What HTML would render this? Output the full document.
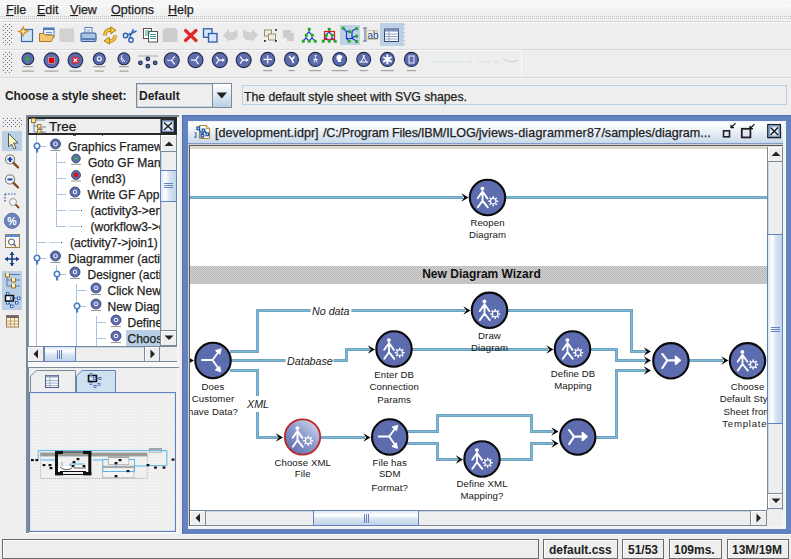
<!DOCTYPE html>
<html><head><meta charset="utf-8">
<style>
*{box-sizing:border-box}
html,body{margin:0;padding:0}
body{width:791px;height:559px;overflow:hidden;position:relative;background:#eeeeee;font-family:"Liberation Sans",sans-serif;color:#333}
.a{position:absolute}
.t{position:absolute;white-space:nowrap;line-height:normal;-webkit-text-stroke:0.25px currentColor}
.dots{background-image:radial-gradient(circle at 1px 1px,#b9b9b9 0.7px,transparent 0.9px);background-size:3px 3px}
.u{text-decoration:underline;text-underline-offset:1px}
</style></head><body>

<svg width="0" height="0" style="position:absolute"><defs>
<pattern id="pd" width="4" height="4" patternUnits="userSpaceOnUse"><rect x="0" y="0" width="1" height="1" fill="#c2c2c2"/><rect x="2" y="2" width="1" height="1" fill="#c2c2c2"/></pattern>
<pattern id="p2" width="2" height="2" patternUnits="userSpaceOnUse"><rect x="0" y="0" width="1" height="1" fill="#c4c4c4"/></pattern>
<pattern id="p3" width="3" height="3" patternUnits="userSpaceOnUse"><rect x="0" y="0" width="1" height="1" fill="#c4c4c4"/></pattern>
<pattern id="pw" width="2" height="2" patternUnits="userSpaceOnUse"><rect x="0" y="0" width="1" height="1" fill="#ffffff"/></pattern>
<pattern id="pg" width="4" height="4" patternUnits="userSpaceOnUse"><rect x="1" y="0" width="1" height="1" fill="#66748a"/><rect x="3" y="2" width="1" height="1" fill="#66748a"/></pattern>
</defs></svg>
<!-- MENU BAR -->
<div class="a" style="left:0;top:0;width:791px;height:22px;background:linear-gradient(#f6f6f6,#eeeeee)"></div>
<svg class="a" style="left:0;top:0" width="791" height="130">
<rect x="0" y="3" width="791" height="5" fill="url(#pw)"/>
<rect x="0" y="14" width="791" height="1" fill="url(#p3)"/>
<rect x="0" y="16" width="791" height="1" fill="url(#p2)"/>
<rect x="1" y="18" width="790" height="1" fill="url(#p2)"/>
<rect x="0" y="20" width="791" height="1" fill="url(#pw)"/>
<rect x="0" y="21" width="791" height="1" fill="#d2d2d2"/>
<rect x="0" y="22" width="791" height="1" fill="#fbfbfb"/>
<rect x="0" y="45" width="406" height="1" fill="url(#p2)"/>
<rect x="1" y="47" width="405" height="1" fill="url(#p2)"/>
<rect x="404" y="23" width="2" height="24" fill="url(#pd)"/>
<rect x="2" y="24" width="10" height="22" fill="url(#pg)"/>
<rect x="0" y="49" width="791" height="1" fill="#d8d8d8"/>
<rect x="0" y="50" width="522" height="1" fill="#fbfbfb"/>
<rect x="521" y="50" width="1" height="27" fill="#fbfbfb"/>
<rect x="0" y="75" width="522" height="1" fill="url(#p2)"/>
<rect x="0" y="77" width="791" height="1" fill="#d6d6d6"/>
<rect x="0" y="78" width="791" height="1" fill="url(#pw)"/>
<rect x="2" y="52" width="10" height="22" fill="url(#pg)"/>
<rect x="3" y="118" width="19" height="9" fill="url(#pg)"/>
</svg>
<div class="t" style="left:6px;top:2.5px;font-size:12.5px;color:#1e1e1e"><span class="u">F</span>ile</div>
<div class="t" style="left:37px;top:2.5px;font-size:12.5px;color:#1e1e1e"><span class="u">E</span>dit</div>
<div class="t" style="left:70px;top:2.5px;font-size:12.5px;color:#1e1e1e"><span class="u">V</span>iew</div>
<div class="t" style="left:111px;top:2.5px;font-size:12.5px;color:#1e1e1e"><span class="u">O</span>ptions</div>
<div class="t" style="left:168px;top:2.5px;font-size:12.5px;color:#1e1e1e"><span class="u">H</span>elp</div>

<!-- STYLE ROW -->
<div class="t" style="left:5px;top:88.5px;font-size:12px;font-weight:bold;-webkit-text-stroke:0;letter-spacing:-0.1px;color:#222">Choose a style sheet:</div>
<div class="a" style="left:136px;top:83px;width:96px;height:25px;border:1px solid #7a8a99;background:#eeeeee"></div>
<div class="a" style="left:137px;top:84px;width:75px;height:23px;border:1px solid #c6d6e6;border-right:none"></div>
<div class="a" style="left:212px;top:84px;width:1px;height:23px;background:#7a8a99"></div>
<div class="a" style="left:213px;top:84px;width:18px;height:23px;background:linear-gradient(#ffffff 0%,#e6eef6 40%,#b8cfe5 100%)"></div>
<svg class="a" style="left:216px;top:92px" width="12" height="7"><path d="M0.5 0.5H11L5.75 6.5Z" fill="#222"/></svg>
<div class="t" style="left:139px;top:89px;font-size:12px;font-weight:bold;-webkit-text-stroke:0;color:#222">Default</div>
<div class="a" style="left:242px;top:85px;width:545px;height:20px;border:1px solid #b8cfe5;background:#eeeeee"></div>
<div class="t" style="left:244px;top:89.5px;font-size:12.2px;color:#222">The default style sheet with SVG shapes.</div>

<!-- LEFT VERTICAL TOOLBAR -->
<div class="a" style="left:2px;top:131px;width:20px;height:20px;background:#b8cfe5"></div>
<div class="a" style="left:2px;top:271px;width:20px;height:39px;background:#b8cfe5"></div>
<div class="a" style="left:340px;top:25px;width:20px;height:20px;background:#bcd0e6"></div>
<div class="a" style="left:380px;top:23px;width:24px;height:23px;background:#bcd0e6"></div>
<svg class="a" style="left:0;top:0" width="791" height="340" viewBox="0 0 791 340"><rect x="21.5" y="29.5" width="11" height="12" fill="#d4e4f4" stroke="#3a6ab0" stroke-width="1.2"/><path d="M23.2 27L24.6 30.3L28 31.5L24.6 32.8L23.2 36L21.8 32.8L18.5 31.5L21.8 30.3Z" fill="#ffe9a0" stroke="#e08a1c" stroke-width="1.1"/><rect x="43.5" y="28" width="10.5" height="9" fill="#e8f0f8" stroke="#4a7ab8" stroke-width="1"/><rect x="43.5" y="28" width="10.5" height="2" fill="#4a7ab8"/><path d="M46 32.5H52M46 34.5H52" stroke="#4a7ab8" stroke-width="0.8"/><path d="M39.5 33.5H44L45 35H51L54 36L51.5 41.5H39.5Z" fill="#f2c870" stroke="#b07a2a" stroke-width="1"/><rect x="59.5" y="28.5" width="14.5" height="13.5" fill="#d2d2d2"/><rect x="85" y="27.5" width="7" height="7" fill="#fff" stroke="#5a7fb8" stroke-width="1"/><path d="M86.5 30H90.5M86.5 32H90.5" stroke="#5a7fb8" stroke-width="0.8"/><rect x="81" y="33" width="15" height="8.5" rx="1.5" fill="#a8c4e4" stroke="#3a5a98" stroke-width="1.1"/><rect x="82" y="38" width="13" height="2" fill="#5a7fb8"/><path d="M105 35.5C105 31 108 29.5 111.5 30" fill="none" stroke="#a87412" stroke-width="3.6"/><path d="M105 35.5C105 31 108 29.5 111.5 30" fill="none" stroke="#f6c840" stroke-width="2.2"/><path d="M110.5 26.8L116 30.2L110.8 33.8Z" fill="#f6c840" stroke="#a87412" stroke-width="0.9"/><path d="M115 35.5C115 40 112 41.5 108.5 41" fill="none" stroke="#a87412" stroke-width="3.6"/><path d="M115 35.5C115 40 112 41.5 108.5 41" fill="none" stroke="#f6c840" stroke-width="2.2"/><path d="M109.5 44.2L104 40.8L109.2 37.2Z" fill="#f6c840" stroke="#a87412" stroke-width="0.9"/><g fill="none" stroke="#2a64b8" stroke-width="1.4"><circle cx="125.5" cy="35.5" r="2.2"/><circle cx="131" cy="40" r="2.2"/><path d="M127.5 35L136.5 31M129.5 37.8L133.5 29"/></g><rect x="143.5" y="28.5" width="8" height="10" fill="#fff" stroke="#555" stroke-width="1"/><rect x="148.5" y="31.5" width="9" height="10.5" fill="#fff" stroke="#555" stroke-width="1"/><path d="M145 31H150M145 33H150M145 35H148M150 34.5H156M150 36.5H156M150 38.5H156" stroke="#2a8a8a" stroke-width="0.9"/><path d="M162.5 30L166 28H175L177.5 30V42H162.5Z" fill="#cdcdcd"/><path d="M185.5 30.5L196 40.5M196 30.5L185.5 40.5" stroke="#e02828" stroke-width="3.2" stroke-linecap="round"/><rect x="203.5" y="28.8" width="8.5" height="8.5" fill="#d8e6f6" stroke="#2a5ab0" stroke-width="1.3"/><rect x="208.5" y="33.5" width="8.5" height="8.5" fill="#d8e6f6" stroke="#2a5ab0" stroke-width="1.3"/><path d="M223 35L229 29V32.5C233 32.5 237.5 30 237.5 29V35C237.5 39 233 41 229 40V42Z" fill="#d0d0d0"/><path d="M258 35L252 29V32.5C248 32.5 243 30 243 29V35C243 39 248 41 252 40V42Z" fill="#d0d0d0"/><rect x="264.5" y="30" width="7" height="6" fill="#e8eef6" stroke="#a08a50" stroke-width="1"/><rect x="268.5" y="34" width="7" height="6" fill="#e8eef6" stroke="#a08a50" stroke-width="1"/><g fill="#1a2a50"><rect x="275" y="29" width="1.8" height="1.8"/><rect x="264" y="40" width="1.8" height="1.8"/><rect x="275" y="40" width="1.8" height="1.8"/></g><path d="M283 30H291V33H294V41H287V38H283Z" fill="#cdcdcd"/><g><path d="M309 29V32L306 35V38L303 41M306 38L309 41M309 32L312 35V38L315 41M312 38L309 41" fill="none" stroke="#1a3ad8" stroke-width="1.1"/><rect x="307.8" y="27.8" width="2.9" height="2.9" fill="#22a822"/><rect x="304.8" y="33.8" width="2.9" height="2.9" fill="#22a822"/><rect x="310.8" y="33.8" width="2.9" height="2.9" fill="#22a822"/><rect x="301.8" y="39.8" width="2.9" height="2.9" fill="#22a822"/><rect x="307.8" y="39.8" width="2.9" height="2.9" fill="#22a822"/><rect x="313.8" y="39.8" width="2.9" height="2.9" fill="#22a822"/></g><g><path d="M329 29V32L326 35V38L323 41M326 38L329 41M329 32L332 35V38L335 41M332 38L329 41" fill="none" stroke="#1a3ad8" stroke-width="1.1"/><rect x="324.5" y="31.5" width="10" height="8" fill="none" stroke="#e01a1a" stroke-width="1.2"/><rect x="327.8" y="27.8" width="2.9" height="2.9" fill="#22a822"/><rect x="324.8" y="33.8" width="2.9" height="2.9" fill="#22a822"/><rect x="330.8" y="33.8" width="2.9" height="2.9" fill="#22a822"/><rect x="321.8" y="39.8" width="2.9" height="2.9" fill="#22a822"/><rect x="327.8" y="39.8" width="2.9" height="2.9" fill="#22a822"/><rect x="333.8" y="39.8" width="2.9" height="2.9" fill="#22a822"/></g><path d="M343.5 28.5L346.5 31.5H349.5M346.5 31.5V38.5L349 41M346.5 38.5H352L354 36.5H356.5M352 31.5L354 29.5H356.5M352 31.5V38.5L356.5 41" fill="none" stroke="#1a3ad8" stroke-width="1.2"/><rect x="341.7" y="26.7" width="2.9" height="2.9" fill="#22a822"/><rect x="348.2" y="30.2" width="2.9" height="2.9" fill="#22a822"/><rect x="355.2" y="27.2" width="2.9" height="2.9" fill="#22a822"/><rect x="355.2" y="34.7" width="2.9" height="2.9" fill="#22a822"/><rect x="347.7" y="39.7" width="2.9" height="2.9" fill="#22a822"/><rect x="355.2" y="40.2" width="2.9" height="2.9" fill="#22a822"/><path d="M363 28H367M365 28V41M363 41H367" stroke="#4a6a98" stroke-width="1"/><rect x="366.5" y="30.5" width="11" height="9" fill="none" stroke="#c8b888" stroke-width="0.8"/><text x="367.5" y="39" font-family="Liberation Sans" font-size="10" fill="#2a4a88">ab</text><rect x="384.5" y="29" width="14" height="12.5" fill="#fff" stroke="#3a4a7a" stroke-width="1"/><rect x="384.5" y="29" width="14" height="2.5" fill="#7a8ab8"/><path d="M385 34H398M385 36.5H398M385 39H398M389 31.5V41.5" stroke="#7a8ab8" stroke-width="0.8"/><circle cx="27.9" cy="58.8" r="5.9" fill="#5d6cae" stroke="#1e2a4a" stroke-width="1.1"/><path d="M26 56L30.5 59L26 62Z" fill="#2ab03a"/><rect x="22.9" y="66" width="10" height="1.2" fill="#666" opacity="0.55"/><rect x="21.9" y="70.5" width="12" height="1.2" fill="#666" opacity="0.55"/><circle cx="51.5" cy="60.3" r="7.4" fill="#5d6cae" stroke="#1e2a4a" stroke-width="1.1"/><rect x="48.5" y="57.3" width="6" height="6" fill="#e00" stroke="#aaa" stroke-width="0.8"/><rect x="44.5" y="70.5" width="14" height="1.2" fill="#666" opacity="0.55"/><circle cx="75.4" cy="60.3" r="7.4" fill="#5d6cae" stroke="#1e2a4a" stroke-width="1.1"/><rect x="72.2" y="57.1" width="6.4" height="6.4" fill="#e02020"/><path d="M73.5 58.5L77.3 62.2M77.3 58.5L73.5 62.2" stroke="#fff" stroke-width="1.1"/><rect x="69.4" y="70.5" width="12" height="1.2" fill="#666" opacity="0.55"/><circle cx="99.3" cy="58.8" r="6" fill="#5d6cae" stroke="#1e2a4a" stroke-width="1.1"/><circle cx="99.3" cy="58.8" r="2" fill="none" stroke="#fff" stroke-width="1.1"/><rect x="93.3" y="66" width="12" height="1.2" fill="#666" opacity="0.55"/><rect x="94.8" y="70.5" width="9" height="1.2" fill="#666" opacity="0.55"/><circle cx="123.9" cy="58.8" r="6" fill="#5d6cae" stroke="#1e2a4a" stroke-width="1.1"/><path d="M122 55L121 59L123 62M122 58L125 62" stroke="#fff" stroke-width="0.9" fill="none"/><rect x="118.9" y="66" width="10" height="1.2" fill="#666" opacity="0.55"/><rect x="119.4" y="70.5" width="9" height="1.2" fill="#666" opacity="0.55"/><rect x="138" y="55.5" width="20" height="1" fill="#aaa"/><path d="M140.4 62.8L147.8 58.8L155.2 62.8L147.8 66.2Z" fill="none" stroke="#cde" stroke-width="0.6"/><circle cx="140.4" cy="62.8" r="1.8" fill="#5d6cae" stroke="#1e2a4a" stroke-width="1.1"/><circle cx="147.8" cy="58.8" r="1.8" fill="#5d6cae" stroke="#1e2a4a" stroke-width="1.1"/><circle cx="155.2" cy="62.8" r="1.8" fill="#5d6cae" stroke="#1e2a4a" stroke-width="1.1"/><circle cx="147.8" cy="66.2" r="1.8" fill="#5d6cae" stroke="#1e2a4a" stroke-width="1.1"/><circle cx="171.7" cy="60.3" r="7.5" fill="#5d6cae" stroke="#1e2a4a" stroke-width="1.1"/><path d="M167.2 60.3H171.7L174.7 56.3M171.7 60.3L174.7 64.3" stroke="#fff" stroke-width="1.1" fill="none"/><circle cx="195.5" cy="60.1" r="7.5" fill="#5d6cae" stroke="#1e2a4a" stroke-width="1.1"/><path d="M191.0 60.1H195.5L198.5 56.1M195.5 60.1L198.5 64.1" stroke="#fff" stroke-width="1.1" fill="none"/><circle cx="219.8" cy="60.1" r="7.5" fill="#5d6cae" stroke="#1e2a4a" stroke-width="1.1"/><path d="M216.3 56.6L218.8 60.1L216.3 63.6M218.8 60.1H223.8" stroke="#fff" stroke-width="1.1" fill="none"/><path d="M224.8 60.1L222.3 58.300000000000004V61.9Z" fill="#fff"/><circle cx="243.7" cy="60.1" r="7.5" fill="#5d6cae" stroke="#1e2a4a" stroke-width="1.1"/><path d="M240.2 56.6L242.7 60.1L240.2 63.6M242.7 60.1H247.7" stroke="#fff" stroke-width="1.1" fill="none"/><path d="M248.7 60.1L246.2 58.300000000000004V61.9Z" fill="#fff"/><circle cx="267.7" cy="59.4" r="7" fill="#5d6cae" stroke="#1e2a4a" stroke-width="1.1"/><path d="M263.5 59.4H271.9M267.7 55.2V63.6" stroke="#fff" stroke-width="1.1"/><rect x="263.2" y="70" width="9" height="1.2" fill="#666" opacity="0.55"/><circle cx="291.5" cy="59.4" r="7" fill="#5d6cae" stroke="#1e2a4a" stroke-width="1.1"/><path d="M289 56L292 59.5L293.5 63M292 59.5L294.5 56.5" stroke="#fff" stroke-width="1.6" fill="none"/><rect x="288.5" y="70" width="6" height="1.2" fill="#666" opacity="0.55"/><circle cx="315.3" cy="59.4" r="7" fill="#5d6cae" stroke="#1e2a4a" stroke-width="1.1"/><circle cx="315.6" cy="55.8" r="1" fill="#fff"/><path d="M315.5 57.5L314 62.5M315.5 57.5L317 62.5M313.5 59.5H317.5" stroke="#fff" stroke-width="0.9"/><rect x="309.3" y="70" width="12" height="1.2" fill="#666" opacity="0.55"/><circle cx="339.7" cy="59.4" r="6.8" fill="#5d6cae" stroke="#1e2a4a" stroke-width="1.1"/><path d="M336.5 57C337 54 342 54 342.5 57.5L341 59V62H338V60.5C336.5 60 336.3 58.5 336.5 57Z" fill="#fff"/><rect x="331.7" y="70" width="16" height="1.2" fill="#666" opacity="0.55"/><circle cx="363.7" cy="59.4" r="7" fill="#5d6cae" stroke="#1e2a4a" stroke-width="1.1"/><path d="M359.5 62H368M361 62L363.7 57L366.5 62" stroke="#fff" stroke-width="1" fill="none"/><circle cx="363.7" cy="56" r="1" fill="#fff"/><rect x="359.7" y="70" width="8" height="1.2" fill="#666" opacity="0.55"/><circle cx="387.4" cy="59.4" r="7" fill="#5d6cae" stroke="#1e2a4a" stroke-width="1.1"/><path d="M387.4 54.5V64.3M383.2 57L391.6 61.8M391.6 57L383.2 61.8" stroke="#fff" stroke-width="2"/><rect x="380.9" y="70" width="13" height="1.2" fill="#666" opacity="0.55"/><circle cx="411.4" cy="59.4" r="7" fill="#5d6cae" stroke="#1e2a4a" stroke-width="1.1"/><rect x="409" y="56" width="5" height="7" fill="none" stroke="#fff" stroke-width="0.9"/><rect x="406.9" y="70" width="9" height="1.2" fill="#666" opacity="0.55"/><path d="M432 62H464M466 62H472M478 62H490M494 62H500" stroke="#cfe0ea" stroke-width="1"/><path d="M503 59Q510 64 518 60" stroke="#c8d0d8" stroke-width="1" fill="none"/><path d="M8.5 133.5V147L11.5 144L14 149L16 148L13.6 143H18Z" fill="#ffffc8" stroke="#555" stroke-width="1"/><circle cx="10" cy="159.4" r="4.6" fill="#f4f4f4" stroke="#888" stroke-width="1.2"/><path d="M13.5 162.9L18 167.4" stroke="#7a4a2a" stroke-width="2.2" stroke-linecap="round"/><path d="M7.5 159.4H12.5" stroke="#1a4ab0" stroke-width="2"/><path d="M10 156.9V161.9" stroke="#1a4ab0" stroke-width="2"/><circle cx="10" cy="179.4" r="4.6" fill="#f4f4f4" stroke="#888" stroke-width="1.2"/><path d="M13.5 182.9L18 187.4" stroke="#7a4a2a" stroke-width="2.2" stroke-linecap="round"/><path d="M7.5 179.4H12.5" stroke="#1a4ab0" stroke-width="2"/><path d="M5 194H16M5 194V203" stroke="#1a4ab0" stroke-width="1.2" stroke-dasharray="1.5 1.5"/><circle cx="13" cy="202" r="3.5" fill="#f4f4f4" stroke="#999" stroke-width="1"/><path d="M15.5 204.5L19 208" stroke="#7a4a2a" stroke-width="1.8"/><circle cx="12" cy="220.8" r="7.6" fill="#6a84b8" stroke="#4a64a0" stroke-width="0.8"/><text x="12" y="224.8" text-anchor="middle" font-family="Liberation Sans" font-weight="bold" font-size="10.5" fill="#fff">%</text><rect x="5.5" y="234.5" width="14" height="13" fill="#f8f8f8" stroke="#a08040" stroke-width="1"/><rect x="5.5" y="234.5" width="14" height="2.5" fill="#5a8ad0"/><circle cx="11.5" cy="242" r="3" fill="none" stroke="#555" stroke-width="1"/><path d="M13.5 244L16 246.5" stroke="#555" stroke-width="1.2"/><path d="M12 252V266M5 259H19" stroke="#1a3a8a" stroke-width="1.6"/><path d="M12 252L9.5 255H14.5Z M12 266L9.5 263H14.5Z M5 259L8 256.5V261.5Z M19 259L16 256.5V261.5Z" fill="#1a3a8a"/><path d="M10 274.5H20M7 277V286H11M7 280H11" fill="none" stroke="#5a78b8" stroke-width="1"/><path d="M16 280H20M16 286H20" stroke="#5a78b8" stroke-width="1"/><g fill="#f8ecc0" stroke="#9a7420" stroke-width="1"><path d="M5.5 273V277H9.5V273"/><path d="M11.5 278V282H15.5V278"/><path d="M11.5 284V288H15.5V284"/></g><g fill="#fff" stroke="#2a5ab0" stroke-width="0.9"><rect x="6.5" y="292.5" width="2.5" height="2.5"/><rect x="17.5" y="297" width="2.5" height="2.5"/><rect x="15.5" y="301.5" width="2.5" height="2.5"/><rect x="10.5" y="305" width="2.5" height="2.5"/><rect x="6.5" y="301.5" width="2.5" height="2.5"/></g><path d="M14 298H17.5M9 303L11 305.5" stroke="#2a5ab0" stroke-width="0.8"/><rect x="5.5" y="295.5" width="8" height="5.5" fill="#fff" stroke="#111" stroke-width="1.5"/><rect x="10.3" y="297" width="2.2" height="2.2" fill="#fff" stroke="#2a5ab0" stroke-width="0.8"/><rect x="6.5" y="315.5" width="12" height="11.5" fill="#fbf0c8" stroke="#9a8060" stroke-width="1"/><rect x="6.5" y="315.5" width="12" height="2.5" fill="#7a6070"/><path d="M7 321H18M7 324H18M10.5 318V327M14.5 318V327" stroke="#b89868" stroke-width="0.8"/></svg>
<!-- TREE PANEL -->
<div class="a" style="left:26px;top:115px;width:153px;height:252px;background:#f8f8f8"></div>
<div class="a" style="left:26px;top:115px;width:153px;height:2px;background:#7a8a99"></div>
<div class="a" style="left:26px;top:115px;width:2px;height:252px;background:#7a8a99"></div>
<div class="a" style="left:28px;top:117px;width:149px;height:245px;background:#fff"></div>
<div class="a" style="left:28px;top:135px;width:1px;height:227px;background:#8d99a8"></div>
<div class="a" style="left:28px;top:117px;width:149px;height:18px;border:2px solid #2a2a2a;border-left-width:1.5px;background:#eeeeee"></div>
<svg class="a" style="left:30px;top:118px" width="17" height="16" viewBox="0 0 17 16">
<path d="M4 3V14M4 8H9M4 14H9M9 8V11M9 11H13M9 14H13" stroke="#6a86b8" stroke-width="1" fill="none"/>
<path d="M6 2H15" stroke="#6a86b8" stroke-width="1"/>
<rect x="1.5" y="0.5" width="4" height="4" fill="#f4e4a8" stroke="#9a7a2a"/>
<rect x="7.5" y="6.5" width="3.5" height="3.5" fill="#f4e4a8" stroke="#9a7a2a"/>
<rect x="7.5" y="11.5" width="3.5" height="3.5" fill="#f4e4a8" stroke="#9a7a2a"/>
<path d="M12 9H16M12 14H16" stroke="#6a86b8" stroke-width="1"/>
</svg>
<div class="t" style="left:49px;top:118.5px;font-size:13.5px;color:#1a1a1a">Tree</div>
<svg class="a" style="left:160px;top:119px" width="16" height="15" viewBox="0 0 16 15">
<rect x="1.2" y="0.8" width="13.4" height="12.6" fill="#d6e4f2" stroke="#222" stroke-width="1.5"/>
<rect x="2.5" y="2" width="10.8" height="10.2" fill="#e6eef7" stroke="#6382bf" stroke-width="1"/>
<path d="M4 3.5L12 11M12 3.5L4 11" stroke="#111" stroke-width="1.2"/>
</svg>
<div class="a" style="left:29px;top:135px;width:132px;height:211px;overflow:hidden">
<div class="a" style="left:97px;top:195px;width:35px;height:16px;background:#b8cfe5;"></div>
<div class="a" style="left:44px;top:0px;width:3px;height:1px;background:#6a5a50;"></div>
<div class="a" style="left:73px;top:0px;width:1px;height:1px;background:#5a5a8a;"></div>
<div class="a" style="left:7px;top:0px;width:1px;height:211px;background:#a8c2e0;"></div>
<div class="a" style="left:27px;top:17px;width:1px;height:75px;background:#a8c2e0;"></div>
<div class="a" style="left:27px;top:130px;width:1px;height:6px;background:#a8c2e0;"></div>
<div class="a" style="left:47px;top:149px;width:1px;height:62px;background:#a8c2e0;"></div>
<div class="a" style="left:67px;top:181px;width:1px;height:30px;background:#a8c2e0;"></div>
<div class="t" style="left:39px;top:5px;font-size:12px;color:#222">Graphics Framework</div>
<div class="t" style="left:59px;top:21px;font-size:12px;color:#222">Goto GF Manual</div>
<div class="t" style="left:62px;top:37px;font-size:12px;color:#222">(end3)</div>
<div class="t" style="left:58.5px;top:53px;font-size:12px;color:#222">Write GF App</div>
<div class="t" style="left:61.5px;top:69px;font-size:12px;color:#222">(activity3->end3)</div>
<div class="t" style="left:61.5px;top:85px;font-size:12px;color:#222">(workflow3->end)</div>
<div class="t" style="left:41px;top:101px;font-size:12px;color:#222">(activity7->join1)</div>
<div class="t" style="left:39px;top:117px;font-size:12px;color:#222">Diagrammer (activity)</div>
<div class="t" style="left:58.5px;top:133px;font-size:12px;color:#222">Designer (activity)</div>
<div class="t" style="left:78.5px;top:149px;font-size:12px;color:#222">Click New</div>
<div class="t" style="left:78.5px;top:165px;font-size:12px;color:#222">New Diagram</div>
<div class="t" style="left:98.5px;top:181px;font-size:12px;color:#222">Define</div>
<div class="t" style="left:98.5px;top:197px;font-size:12px;color:#222">Choose</div>
<div class="a" style="left:11px;top:11px;width:6px;height:1px;background:#a8c2e0;"></div>
<div class="a" style="left:28px;top:27px;width:9px;height:1px;background:#a8c2e0;"></div>
<div class="a" style="left:28px;top:43px;width:9px;height:1px;background:#a8c2e0;"></div>
<div class="a" style="left:28px;top:59px;width:9px;height:1px;background:#a8c2e0;"></div>
<div class="a" style="left:28px;top:75px;width:9px;height:1px;background:#a8c2e0;"></div>
<div class="a" style="left:28px;top:91px;width:9px;height:1px;background:#a8c2e0;"></div>
<div class="a" style="left:8px;top:107px;width:9px;height:1px;background:#a8c2e0;"></div>
<div class="a" style="left:11px;top:123px;width:6px;height:1px;background:#a8c2e0;"></div>
<div class="a" style="left:31px;top:139px;width:6px;height:1px;background:#a8c2e0;"></div>
<div class="a" style="left:48px;top:155px;width:9px;height:1px;background:#a8c2e0;"></div>
<div class="a" style="left:51px;top:171px;width:6px;height:1px;background:#a8c2e0;"></div>
<div class="a" style="left:68px;top:187px;width:9px;height:1px;background:#a8c2e0;"></div>
<div class="a" style="left:68px;top:203px;width:9px;height:1px;background:#a8c2e0;"></div>
<div class="a" style="left:40px;top:75px;width:11px;height:1px;background:#b8cfe5;"></div>
<div class="a" style="left:52px;top:75px;width:1px;height:1px;background:#333;"></div>
<div class="a" style="left:40px;top:91px;width:11px;height:1px;background:#b8cfe5;"></div>
<div class="a" style="left:52px;top:91px;width:1px;height:1px;background:#333;"></div>
<div class="a" style="left:20px;top:107px;width:11px;height:1px;background:#b8cfe5;"></div>
<div class="a" style="left:32px;top:107px;width:1px;height:1px;background:#333;"></div>
<svg class="a" style="left:0;top:0" width="132" height="211" viewBox="29 135 132 211"><circle cx="37" cy="146" r="2.7" fill="#fff" stroke="#4a7cc4" stroke-width="1.6"/><rect x="36" y="148.5" width="2.2" height="4" fill="#4a7cc4"/><circle cx="37" cy="258" r="2.7" fill="#fff" stroke="#4a7cc4" stroke-width="1.6"/><rect x="36" y="260.5" width="2.2" height="4" fill="#4a7cc4"/><circle cx="57" cy="274" r="2.7" fill="#fff" stroke="#4a7cc4" stroke-width="1.6"/><rect x="56" y="276.5" width="2.2" height="4" fill="#4a7cc4"/><circle cx="77" cy="306" r="2.7" fill="#fff" stroke="#4a7cc4" stroke-width="1.6"/><rect x="76" y="308.5" width="2.2" height="4" fill="#4a7cc4"/><circle cx="55.5" cy="144" r="5" fill="#5d6cae" stroke="#2e3a6a" stroke-width="0.8"/><circle cx="55.5" cy="144" r="1.8" fill="none" stroke="#fff" stroke-width="1"/><rect x="50.5" y="150" width="10" height="1" fill="#999"/><circle cx="76" cy="158.5" r="4.3" fill="#5d6cae" stroke="#2e3a6a" stroke-width="0.8"/><path d="M74.5 156.0L78.5 158.5L74.5 161.0Z" fill="#3bb04a"/><rect x="71" y="163.8" width="10" height="1" fill="#999"/><rect x="71" y="164" width="10" height="1" fill="#aaa"/><circle cx="76" cy="175" r="4.5" fill="#5d6cae" stroke="#2e3a6a" stroke-width="0.8"/><rect x="74" y="173" width="4" height="4" fill="#e01010"/><rect x="71" y="180.5" width="10" height="1" fill="#999"/><circle cx="75.0" cy="192" r="5" fill="#5d6cae" stroke="#2e3a6a" stroke-width="0.8"/><circle cx="75.0" cy="192" r="1.8" fill="none" stroke="#fff" stroke-width="1"/><rect x="70.0" y="198" width="10" height="1" fill="#999"/><circle cx="55.5" cy="256" r="5" fill="#5d6cae" stroke="#2e3a6a" stroke-width="0.8"/><circle cx="55.5" cy="256" r="1.8" fill="none" stroke="#fff" stroke-width="1"/><rect x="50.5" y="262" width="10" height="1" fill="#999"/><circle cx="75.0" cy="272" r="5" fill="#5d6cae" stroke="#2e3a6a" stroke-width="0.8"/><circle cx="75.0" cy="272" r="1.8" fill="none" stroke="#fff" stroke-width="1"/><rect x="70.0" y="278" width="10" height="1" fill="#999"/><circle cx="96.0" cy="288" r="5" fill="#5d6cae" stroke="#2e3a6a" stroke-width="0.8"/><circle cx="96.0" cy="288" r="1.8" fill="none" stroke="#fff" stroke-width="1"/><rect x="91.0" y="294" width="10" height="1" fill="#999"/><circle cx="96.0" cy="304" r="5" fill="#5d6cae" stroke="#2e3a6a" stroke-width="0.8"/><circle cx="96.0" cy="304" r="1.8" fill="none" stroke="#fff" stroke-width="1"/><rect x="91.0" y="310" width="10" height="1" fill="#999"/><circle cx="116.0" cy="320" r="5" fill="#5d6cae" stroke="#2e3a6a" stroke-width="0.8"/><circle cx="116.0" cy="320" r="1.8" fill="none" stroke="#fff" stroke-width="1"/><rect x="111.0" y="326" width="10" height="1" fill="#999"/><circle cx="116.0" cy="336" r="5" fill="#5d6cae" stroke="#2e3a6a" stroke-width="0.8"/><circle cx="116.0" cy="336" r="1.8" fill="none" stroke="#fff" stroke-width="1"/><rect x="111.0" y="342" width="10" height="1" fill="#999"/></svg>
</div>
<div class="a" style="left:160px;top:135px;width:17px;height:211px;background:#eeeeee;border-left:1px solid #7a8a99;border-right:1px solid #7a8a99"></div>
<div class="a" style="left:161px;top:135px;width:1px;height:211px;background:#c4d7ea"></div>
<div class="a" style="left:160px;top:135px;width:17px;height:17px;background:#eeeeee;border:1px solid #7a8a99;border-top:none;box-shadow:inset 1px 1px 0 #fff"></div>
<svg class="a" style="left:164px;top:141px" width="10" height="6"><path d="M0.5 5H9.5L5 0.5Z" fill="#222"/></svg>
<div class="a" style="left:160px;top:170px;width:17px;height:32px;border:1px solid #6382bf;background:linear-gradient(90deg,#dde8f3 0%,#ffffff 30%,#d8e5f2 55%,#c1d4e9 100%)"></div>
<div class="a" style="left:164px;top:183px;width:9px;height:1px;background:#6382bf;box-shadow:0 2px 0 #6382bf,0 4px 0 #6382bf"></div>
<div class="a" style="left:160px;top:330px;width:17px;height:16px;background:#eeeeee;border:1px solid #7a8a99;box-shadow:inset 1px 1px 0 #fff"></div>
<svg class="a" style="left:164px;top:335px" width="10" height="6"><path d="M0.5 0.5H9.5L5 5Z" fill="#222"/></svg>
<div class="a" style="left:28px;top:346px;width:149px;height:16px;background:#eeeeee;border-top:1px solid #7a8a99;border-bottom:1px solid #7a8a99"></div>
<div class="a" style="left:28px;top:347px;width:132px;height:1px;background:#c4d7ea"></div>
<div class="a" style="left:28px;top:346px;width:16px;height:16px;background:#eeeeee;border:1px solid #7a8a99;border-left:none;box-shadow:inset 1px 1px 0 #fff"></div>
<svg class="a" style="left:33px;top:349px" width="6" height="10"><path d="M5 0.5V9.5L0.5 5Z" fill="#222"/></svg>
<div class="a" style="left:44px;top:346px;width:32px;height:16px;border:1px solid #6382bf;background:linear-gradient(#dde8f3 0%,#ffffff 30%,#d8e5f2 55%,#c1d4e9 100%)"></div>
<div class="a" style="left:57px;top:350px;width:1px;height:9px;background:#6382bf;box-shadow:2px 0 0 #6382bf,4px 0 0 #6382bf"></div>
<div class="a" style="left:144px;top:346px;width:16px;height:16px;background:#eeeeee;border:1px solid #7a8a99;box-shadow:inset 1px 1px 0 #fff"></div>
<svg class="a" style="left:150px;top:349px" width="6" height="10"><path d="M0.5 0.5V9.5L5 5Z" fill="#222"/></svg>
<div class="a" style="left:160px;top:346px;width:17px;height:16px;background:#eeeeee;border-top:1px solid #7a8a99;border-bottom:1px solid #7a8a99"></div>
<!-- OVERVIEW -->
<div class="a" style="left:26px;top:367px;width:153px;height:167px;background:#f8f8f8"></div>
<div class="a" style="left:26px;top:367px;width:153px;height:1px;background:#7a8a99"></div>
<div class="a" style="left:26px;top:367px;width:3px;height:166px;background:#7a8a99"></div>
<div class="a" style="left:29px;top:368px;width:148px;height:164px;background:#eeeeee"></div>
<svg class="a" style="left:0;top:0" width="200" height="559" viewBox="0 0 200 559"><path d="M30.5 392V376L36.5 370.5H75.5V392" fill="#eeeeee" stroke="#7a8a99" stroke-width="1"/><rect x="45.5" y="375.5" width="13" height="12" fill="#fafafa" stroke="#4a5a8a" stroke-width="1"/><rect x="45.5" y="375.5" width="13" height="2" fill="#8a9ac0"/><path d="M46 380.5H58M46 383H58M46 385.5H58M50 377.5V387.5" stroke="#8a9ac0" stroke-width="0.8"/><path d="M76.5 393V376L82 370.5H115.5V393" fill="#cfe0f0" stroke="#6382bf" stroke-width="1"/><rect x="88.5" y="375.5" width="8" height="6" fill="none" stroke="#111" stroke-width="1.6"/><g fill="#fff" stroke="#3a64b0" stroke-width="0.8"><rect x="90" y="373.5" width="2" height="2"/><rect x="93.5" y="377.5" width="2" height="2"/><rect x="99" y="377.5" width="2" height="2"/><rect x="90" y="382.5" width="2" height="2"/><rect x="94" y="385.5" width="2" height="2"/><rect x="98" y="383.5" width="2" height="2"/></g><path d="M96.5 378.5H99" stroke="#3a64b0" stroke-width="0.8"/><defs><pattern id="pov" width="3" height="3" patternUnits="userSpaceOnUse"><rect width="3" height="3" fill="#eeeeee"/><rect width="1" height="1" fill="#f9f9f9"/></pattern></defs><rect x="29.5" y="392.5" width="146" height="139" fill="#eeeeee" stroke="#6382bf" stroke-width="1"/><rect x="30.5" y="393.5" width="144" height="137" fill="none" stroke="#c8d8ea" stroke-width="1"/><rect x="30.5" y="393.5" width="144" height="137" fill="url(#pov)"/><rect x="40.4" y="452.8" width="106.9" height="25.6" fill="#f0f0f0" stroke="#999" stroke-width="0.8" stroke-dasharray="1 1"/><rect x="40.4" y="452.8" width="106.9" height="3.6" fill="#9a9a9a"/><rect x="108.4" y="456.1" width="20.5" height="8.4" fill="#f4f4f4" stroke="#999" stroke-width="0.6"/><rect x="108.4" y="456.1" width="20.5" height="2" fill="#aaa"/><rect x="102.8" y="466.1" width="31.2" height="11.7" fill="#f4f4f4" stroke="#999" stroke-width="0.6"/><rect x="102.8" y="466.1" width="31.2" height="2" fill="#aaa"/><rect x="149.5" y="448.3" width="12.2" height="3.9" fill="#f4f4f4" stroke="#888" stroke-width="0.6"/><rect x="149.5" y="448.3" width="12.2" height="1.5" fill="#999"/><path d="M38.2 460V450.6H166.8V465.6H147.3M93 460H102.8M102.8 459.5V471.5M102.8 459.5H108.4M128.9 459.5H134.5V471.5H102.8M134.5 466H147.3M41 460H55M62 462V468H70V464H84M116 462V468" fill="none" stroke="#56b4ea" stroke-width="1"/><rect x="56" y="452" width="34.5" height="22.5" fill="none" stroke="#111" stroke-width="1"/><g fill="#111"><rect x="55" y="451" width="8" height="3"/><rect x="83" y="451" width="8.3" height="3"/><rect x="55" y="451" width="3" height="24"/><rect x="88.3" y="451" width="3" height="24"/><rect x="55" y="472" width="8" height="3.4"/><rect x="83" y="472" width="8.3" height="3.4"/><rect x="60" y="470" width="26" height="2"/></g><rect x="58" y="466" width="30" height="5" fill="#fff"/><path d="M60 467Q66 472 72 468M74 468H86" fill="none" stroke="#333" stroke-width="0.8"/><rect x="31.0" y="459" width="2.8" height="2.2" fill="#111"/><rect x="35.4" y="459" width="2.8" height="2.2" fill="#111"/><rect x="42.6" y="464" width="2.8" height="2.2" fill="#111"/><rect x="48.6" y="464" width="2.8" height="2.2" fill="#111"/><rect x="49.6" y="467" width="2.8" height="2.2" fill="#111"/><rect x="72.6" y="461" width="2.8" height="2.2" fill="#111"/><rect x="76.6" y="458" width="2.8" height="2.2" fill="#111"/><rect x="71.6" y="465" width="2.8" height="2.2" fill="#111"/><rect x="114.6" y="462" width="2.8" height="2.2" fill="#111"/><rect x="114.6" y="475" width="2.8" height="2.2" fill="#111"/><rect x="126.6" y="470" width="2.8" height="2.2" fill="#111"/><rect x="146.6" y="464" width="2.8" height="2.2" fill="#111"/><rect x="154.1" y="466.5" width="2.8" height="2.2" fill="#111"/><rect x="162.6" y="466.5" width="2.8" height="2.2" fill="#111"/><rect x="171.6" y="458.5" width="2.8" height="2.2" fill="#111"/><rect x="118.6" y="459" width="2.8" height="2.2" fill="#111"/><rect x="82.6" y="465" width="2.8" height="2.2" fill="#111"/></svg>
<!-- INTERNAL FRAME -->
<div class="a" style="left:182px;top:115px;width:609px;height:419px;background:#6382bf;border-top:1px solid #5070b0;border-left:1px solid #5070b0"></div>
<div class="a" style="left:188px;top:121px;width:598px;height:408px;background:#eeeeee"></div>
<div class="a" style="left:188px;top:121px;width:598px;height:22px;border-radius:4px 4px 0 0;background:linear-gradient(#eef3f9 0%,#ffffff 12%,#f2f6fa 35%,#c9d9ea 100%)"></div>
<div class="a" style="left:188px;top:143px;width:598px;height:1px;background:#7d9ac8"></div>
<svg class="a" style="left:194px;top:125px" width="16" height="14" viewBox="0 0 16 14">
<path d="M5.5 0.5H12.5L15.5 3.5V13.5H5.5Z" fill="#fffef8" stroke="#a8822e" stroke-width="1"/>
<path d="M12.5 0.5V3.5H15.5" fill="#f0d89a" stroke="#a8822e" stroke-width="0.8"/>
<g fill="none" stroke="#1f57a6" stroke-width="1.3"><rect x="3" y="2" width="2.6" height="2.6"/><rect x="8.2" y="4.2" width="2.6" height="2.6"/><rect x="7" y="9.5" width="2.6" height="2.6"/><rect x="12" y="8" width="2.6" height="2.6"/><path d="M5 4.5L8.4 9.8M9.5 6.8L8.6 9.6M10.8 6.2L12.5 8.2"/></g>
<path d="M0.5 8H3M1 10H3M0 12H3" stroke="#1f57a6" stroke-width="1"/>
</svg>
<div class="t" style="left:215px;top:126px;font-size:12.6px;color:#222">[development.idpr]</div>
<div class="t" style="left:323px;top:126px;font-size:12.6px;color:#222;letter-spacing:-0.19px">/C:/Program Files/IBM/ILOG/j</div>
<div class="t" style="left:481.5px;top:126px;font-size:12.6px;color:#222;letter-spacing:0.16px">views-diagrammer87</div>
<div class="t" style="left:601.4px;top:126px;font-size:12.6px;color:#222;letter-spacing:-0.03px">/samples/diagram...</div>
<!-- title buttons -->
<svg class="a" style="left:720px;top:121px" width="66" height="20" viewBox="0 0 66 20">
<rect x="3.5" y="9.8" width="6" height="6" fill="#dfe8f2" stroke="#222" stroke-width="1.6"/>
<path d="M15.5 2.2L11.2 6.5M11 3.8V6.7H14" fill="none" stroke="#111" stroke-width="1.2"/>
<rect x="21.8" y="7.8" width="8.6" height="8.6" fill="#dfe8f2" stroke="#222" stroke-width="1.8"/>
<path d="M34.5 3.2L30.2 7.5M30 4.8V7.7H33" fill="none" stroke="#111" stroke-width="1.2"/>
<rect x="47.8" y="3.6" width="12.6" height="13" fill="#c9d9ea" stroke="#222" stroke-width="1.4"/>
<rect x="49.2" y="5" width="9.8" height="10.2" fill="#dfe8f2" stroke="#6382bf" stroke-width="1"/>
<path d="M50.5 6.5L58 14M58 6.5L50.5 14" stroke="#111" stroke-width="1.3"/>
</svg>
<!-- content inset -->
<div class="a" style="left:188px;top:144px;width:598px;height:1px;background:#d0d0d0"></div>
<div class="a" style="left:188px;top:145px;width:598px;height:1px;background:#5c5c5c"></div>
<div class="a" style="left:188px;top:144px;width:1px;height:384px;background:#d0d0d0"></div>
<div class="a" style="left:189px;top:145px;width:1px;height:383px;background:#5c5c5c"></div>
<div class="a" style="left:190px;top:146px;width:596px;height:3px;background:#dedad2"></div>
<div class="a" style="left:190px;top:149px;width:577px;height:361px;background:#fff"></div>
<svg class="a" style="left:0;top:0" width="791" height="559" viewBox="0 0 791 559">
<defs><linearGradient id="rg" x1="0.15" y1="0.9" x2="0.85" y2="0.1"><stop offset="0" stop-color="#6272b2"/><stop offset="0.55" stop-color="#8e9ccc"/><stop offset="1" stop-color="#c8d2ea"/></linearGradient>
<pattern id="bandp" width="2" height="2" patternUnits="userSpaceOnUse"><rect width="2" height="2" fill="#d0d0d0"/><rect width="1" height="1" fill="#b8b8b8"/><rect x="1" y="1" width="1" height="1" fill="#bcbcbc"/></pattern>
<clipPath id="vc"><rect x="190" y="148" width="577" height="362"/></clipPath></defs>
<g clip-path="url(#vc)">
<rect x="190" y="266" width="577" height="18" fill="url(#bandp)"/>
<text x="481.5" y="278.1" text-anchor="middle" font-family="Liberation Sans" font-weight="bold" font-size="12" fill="#111">New Diagram Wizard</text>
<g fill="none" stroke="#6fa3bf" stroke-width="3" stroke-linejoin="miter">
<path d="M189 197.5 H463"/>
<path d="M506 197.5 H770"/>
<path d="M230 351.5 H257.5 V310.5 H310.5"/>
<path d="M351.5 310.5 H465"/>
<path d="M230 360.5 H285.5"/>
<path d="M333.5 360.5 H346.5 V349.5 H370"/>
<path d="M230 370.5 H257.5 V396"/>
<path d="M257.5 412 V437.5 H278"/>
<path d="M412 349.5 H548"/>
<path d="M507 310.5 H631.5 V351.5 H646"/>
<path d="M591 349.5 H616.5 V360.5 H646"/>
<path d="M596 437.5 H616.5 V370.5 H646"/>
<path d="M689 360.5 H723"/>
<path d="M321 437.5 H365"/>
<path d="M407 431.5 H437.5 V415.5 H531.5 V431.5 H553"/>
<path d="M407 443.5 H437.5 V459.5 H458"/>
<path d="M500 459.5 H531.5 V443.5 H553"/>
</g>
<g fill="none" stroke="#7cb8d8" stroke-width="1.2" stroke-linejoin="miter">
<path d="M189 197.5 H463"/>
<path d="M506 197.5 H770"/>
<path d="M230 351.5 H257.5 V310.5 H310.5"/>
<path d="M351.5 310.5 H465"/>
<path d="M230 360.5 H285.5"/>
<path d="M333.5 360.5 H346.5 V349.5 H370"/>
<path d="M230 370.5 H257.5 V396"/>
<path d="M257.5 412 V437.5 H278"/>
<path d="M412 349.5 H548"/>
<path d="M507 310.5 H631.5 V351.5 H646"/>
<path d="M591 349.5 H616.5 V360.5 H646"/>
<path d="M596 437.5 H616.5 V370.5 H646"/>
<path d="M689 360.5 H723"/>
<path d="M321 437.5 H365"/>
<path d="M407 431.5 H437.5 V415.5 H531.5 V431.5 H553"/>
<path d="M407 443.5 H437.5 V459.5 H458"/>
<path d="M500 459.5 H531.5 V443.5 H553"/>
</g>
<path d="M468.5 197.5 L461.3 193.3 L464.2 197.5 L461.3 201.7 Z" fill="#0a0a0a"/>
<path d="M470.5 310.5 L463.3 306.3 L466.2 310.5 L463.3 314.7 Z" fill="#0a0a0a"/>
<path d="M375 349.5 L367.8 345.3 L370.7 349.5 L367.8 353.7 Z" fill="#0a0a0a"/>
<path d="M283 437.5 L275.8 433.3 L278.7 437.5 L275.8 441.7 Z" fill="#0a0a0a"/>
<path d="M553.5 349.5 L546.3 345.3 L549.2 349.5 L546.3 353.7 Z" fill="#0a0a0a"/>
<path d="M651 351.5 L643.8 347.3 L646.7 351.5 L643.8 355.7 Z" fill="#0a0a0a"/>
<path d="M651 360.5 L643.8 356.3 L646.7 360.5 L643.8 364.7 Z" fill="#0a0a0a"/>
<path d="M651 370.5 L643.8 366.3 L646.7 370.5 L643.8 374.7 Z" fill="#0a0a0a"/>
<path d="M728.5 360.5 L721.3 356.3 L724.2 360.5 L721.3 364.7 Z" fill="#0a0a0a"/>
<path d="M370.5 437.5 L363.3 433.3 L366.2 437.5 L363.3 441.7 Z" fill="#0a0a0a"/>
<path d="M558.5 431.5 L551.3 427.3 L554.2 431.5 L551.3 435.7 Z" fill="#0a0a0a"/>
<path d="M463 459.5 L455.8 455.3 L458.7 459.5 L455.8 463.7 Z" fill="#0a0a0a"/>
<path d="M558.5 443.5 L551.3 439.3 L554.2 443.5 L551.3 447.7 Z" fill="#0a0a0a"/>
<path d="M194 360.5 L186.8 356.3 L189.7 360.5 L186.8 364.7 Z" fill="#0a0a0a"/>
<circle cx="487.5" cy="197.5" r="17.7" fill="#5d6cae" stroke="#0a0a0a" stroke-width="2.1"/><g transform="translate(487.5,197.5)" stroke="#fff" fill="none" stroke-width="1.9" stroke-linecap="round" stroke-linejoin="round"><circle cx="-5.1" cy="-8.9" r="1.95" fill="#fff" stroke="none"/><path d="M-5 -6 L-9.8 0.8 M-5 -6 L-0.1 0.9 M-5 -6 L-5 3.2 L-9.7 9.8 M-5 3.2 L0.3 9.8"/><g transform="translate(5.7,3.7)" stroke-width="1.2"><circle r="2.8"/><line x1="3.20" y1="0.00" x2="5.00" y2="0.00" stroke-width="1.5" stroke-linecap="butt"/><line x1="2.26" y1="2.26" x2="3.54" y2="3.54" stroke-width="1.5" stroke-linecap="butt"/><line x1="0.00" y1="3.20" x2="0.00" y2="5.00" stroke-width="1.5" stroke-linecap="butt"/><line x1="-2.26" y1="2.26" x2="-3.54" y2="3.54" stroke-width="1.5" stroke-linecap="butt"/><line x1="-3.20" y1="0.00" x2="-5.00" y2="0.00" stroke-width="1.5" stroke-linecap="butt"/><line x1="-2.26" y1="-2.26" x2="-3.54" y2="-3.54" stroke-width="1.5" stroke-linecap="butt"/><line x1="-0.00" y1="-3.20" x2="-0.00" y2="-5.00" stroke-width="1.5" stroke-linecap="butt"/><line x1="2.26" y1="-2.26" x2="3.54" y2="-3.54" stroke-width="1.5" stroke-linecap="butt"/></g></g>
<circle cx="213" cy="360.5" r="17.7" fill="#5d6cae" stroke="#0a0a0a" stroke-width="2.1"/><g transform="translate(213,360.5)" stroke="#fff" fill="none" stroke-width="1.9" stroke-linecap="round" stroke-linejoin="round"><path d="M-11 -0.5 L-0.5 -0.5 L6.5 -10 M-0.5 -0.5 L6.5 9.5"/><path d="M7.8 -11.6 L2.4 -9.9 L6.6 -6.5 Z M7.4 11.2 L2.2 9.4 L6.4 6.0 Z" fill="#fff" stroke-width="1"/></g>
<circle cx="489.5" cy="310.3" r="17.7" fill="#5d6cae" stroke="#0a0a0a" stroke-width="2.1"/><g transform="translate(489.5,310.3)" stroke="#fff" fill="none" stroke-width="1.9" stroke-linecap="round" stroke-linejoin="round"><circle cx="-5.1" cy="-8.9" r="1.95" fill="#fff" stroke="none"/><path d="M-5 -6 L-9.8 0.8 M-5 -6 L-0.1 0.9 M-5 -6 L-5 3.2 L-9.7 9.8 M-5 3.2 L0.3 9.8"/><g transform="translate(5.7,3.7)" stroke-width="1.2"><circle r="2.8"/><line x1="3.20" y1="0.00" x2="5.00" y2="0.00" stroke-width="1.5" stroke-linecap="butt"/><line x1="2.26" y1="2.26" x2="3.54" y2="3.54" stroke-width="1.5" stroke-linecap="butt"/><line x1="0.00" y1="3.20" x2="0.00" y2="5.00" stroke-width="1.5" stroke-linecap="butt"/><line x1="-2.26" y1="2.26" x2="-3.54" y2="3.54" stroke-width="1.5" stroke-linecap="butt"/><line x1="-3.20" y1="0.00" x2="-5.00" y2="0.00" stroke-width="1.5" stroke-linecap="butt"/><line x1="-2.26" y1="-2.26" x2="-3.54" y2="-3.54" stroke-width="1.5" stroke-linecap="butt"/><line x1="-0.00" y1="-3.20" x2="-0.00" y2="-5.00" stroke-width="1.5" stroke-linecap="butt"/><line x1="2.26" y1="-2.26" x2="3.54" y2="-3.54" stroke-width="1.5" stroke-linecap="butt"/></g></g>
<circle cx="394" cy="349" r="17.7" fill="#5d6cae" stroke="#0a0a0a" stroke-width="2.1"/><g transform="translate(394,349)" stroke="#fff" fill="none" stroke-width="1.9" stroke-linecap="round" stroke-linejoin="round"><circle cx="-5.1" cy="-8.9" r="1.95" fill="#fff" stroke="none"/><path d="M-5 -6 L-9.8 0.8 M-5 -6 L-0.1 0.9 M-5 -6 L-5 3.2 L-9.7 9.8 M-5 3.2 L0.3 9.8"/><g transform="translate(5.7,3.7)" stroke-width="1.2"><circle r="2.8"/><line x1="3.20" y1="0.00" x2="5.00" y2="0.00" stroke-width="1.5" stroke-linecap="butt"/><line x1="2.26" y1="2.26" x2="3.54" y2="3.54" stroke-width="1.5" stroke-linecap="butt"/><line x1="0.00" y1="3.20" x2="0.00" y2="5.00" stroke-width="1.5" stroke-linecap="butt"/><line x1="-2.26" y1="2.26" x2="-3.54" y2="3.54" stroke-width="1.5" stroke-linecap="butt"/><line x1="-3.20" y1="0.00" x2="-5.00" y2="0.00" stroke-width="1.5" stroke-linecap="butt"/><line x1="-2.26" y1="-2.26" x2="-3.54" y2="-3.54" stroke-width="1.5" stroke-linecap="butt"/><line x1="-0.00" y1="-3.20" x2="-0.00" y2="-5.00" stroke-width="1.5" stroke-linecap="butt"/><line x1="2.26" y1="-2.26" x2="3.54" y2="-3.54" stroke-width="1.5" stroke-linecap="butt"/></g></g>
<circle cx="572.5" cy="349" r="17.7" fill="#5d6cae" stroke="#0a0a0a" stroke-width="2.1"/><g transform="translate(572.5,349)" stroke="#fff" fill="none" stroke-width="1.9" stroke-linecap="round" stroke-linejoin="round"><circle cx="-5.1" cy="-8.9" r="1.95" fill="#fff" stroke="none"/><path d="M-5 -6 L-9.8 0.8 M-5 -6 L-0.1 0.9 M-5 -6 L-5 3.2 L-9.7 9.8 M-5 3.2 L0.3 9.8"/><g transform="translate(5.7,3.7)" stroke-width="1.2"><circle r="2.8"/><line x1="3.20" y1="0.00" x2="5.00" y2="0.00" stroke-width="1.5" stroke-linecap="butt"/><line x1="2.26" y1="2.26" x2="3.54" y2="3.54" stroke-width="1.5" stroke-linecap="butt"/><line x1="0.00" y1="3.20" x2="0.00" y2="5.00" stroke-width="1.5" stroke-linecap="butt"/><line x1="-2.26" y1="2.26" x2="-3.54" y2="3.54" stroke-width="1.5" stroke-linecap="butt"/><line x1="-3.20" y1="0.00" x2="-5.00" y2="0.00" stroke-width="1.5" stroke-linecap="butt"/><line x1="-2.26" y1="-2.26" x2="-3.54" y2="-3.54" stroke-width="1.5" stroke-linecap="butt"/><line x1="-0.00" y1="-3.20" x2="-0.00" y2="-5.00" stroke-width="1.5" stroke-linecap="butt"/><line x1="2.26" y1="-2.26" x2="3.54" y2="-3.54" stroke-width="1.5" stroke-linecap="butt"/></g></g>
<circle cx="670.9" cy="360.8" r="17.7" fill="#5d6cae" stroke="#0a0a0a" stroke-width="2.1"/><g transform="translate(670.9,360.8)" stroke="#fff" fill="none" stroke-width="1.9" stroke-linecap="round" stroke-linejoin="round"><path d="M-8.6 -6.8 L-3.6 -0.4 L-8.6 7.2 M-3.6 -0.4 L8.5 -0.4" stroke-width="2.1"/><path d="M4.6 -4.6 L9.4 -0.4 L4.6 3.6 Z" fill="#fff" stroke-width="1.4"/></g>
<circle cx="747.5" cy="360.8" r="17.7" fill="#5d6cae" stroke="#0a0a0a" stroke-width="2.1"/><g transform="translate(747.5,360.8)" stroke="#fff" fill="none" stroke-width="1.9" stroke-linecap="round" stroke-linejoin="round"><circle cx="-5.1" cy="-8.9" r="1.95" fill="#fff" stroke="none"/><path d="M-5 -6 L-9.8 0.8 M-5 -6 L-0.1 0.9 M-5 -6 L-5 3.2 L-9.7 9.8 M-5 3.2 L0.3 9.8"/><g transform="translate(5.7,3.7)" stroke-width="1.2"><circle r="2.8"/><line x1="3.20" y1="0.00" x2="5.00" y2="0.00" stroke-width="1.5" stroke-linecap="butt"/><line x1="2.26" y1="2.26" x2="3.54" y2="3.54" stroke-width="1.5" stroke-linecap="butt"/><line x1="0.00" y1="3.20" x2="0.00" y2="5.00" stroke-width="1.5" stroke-linecap="butt"/><line x1="-2.26" y1="2.26" x2="-3.54" y2="3.54" stroke-width="1.5" stroke-linecap="butt"/><line x1="-3.20" y1="0.00" x2="-5.00" y2="0.00" stroke-width="1.5" stroke-linecap="butt"/><line x1="-2.26" y1="-2.26" x2="-3.54" y2="-3.54" stroke-width="1.5" stroke-linecap="butt"/><line x1="-0.00" y1="-3.20" x2="-0.00" y2="-5.00" stroke-width="1.5" stroke-linecap="butt"/><line x1="2.26" y1="-2.26" x2="3.54" y2="-3.54" stroke-width="1.5" stroke-linecap="butt"/></g></g>
<circle cx="302.5" cy="437" r="17.7" fill="url(#rg)" stroke="#c02626" stroke-width="1.8"/><g transform="translate(302.5,437)" stroke="#fff" fill="none" stroke-width="1.9" stroke-linecap="round" stroke-linejoin="round"><circle cx="-5.1" cy="-8.9" r="1.95" fill="#fff" stroke="none"/><path d="M-5 -6 L-9.8 0.8 M-5 -6 L-0.1 0.9 M-5 -6 L-5 3.2 L-9.7 9.8 M-5 3.2 L0.3 9.8"/><g transform="translate(5.7,3.7)" stroke-width="1.2"><circle r="2.8"/><line x1="3.20" y1="0.00" x2="5.00" y2="0.00" stroke-width="1.5" stroke-linecap="butt"/><line x1="2.26" y1="2.26" x2="3.54" y2="3.54" stroke-width="1.5" stroke-linecap="butt"/><line x1="0.00" y1="3.20" x2="0.00" y2="5.00" stroke-width="1.5" stroke-linecap="butt"/><line x1="-2.26" y1="2.26" x2="-3.54" y2="3.54" stroke-width="1.5" stroke-linecap="butt"/><line x1="-3.20" y1="0.00" x2="-5.00" y2="0.00" stroke-width="1.5" stroke-linecap="butt"/><line x1="-2.26" y1="-2.26" x2="-3.54" y2="-3.54" stroke-width="1.5" stroke-linecap="butt"/><line x1="-0.00" y1="-3.20" x2="-0.00" y2="-5.00" stroke-width="1.5" stroke-linecap="butt"/><line x1="2.26" y1="-2.26" x2="3.54" y2="-3.54" stroke-width="1.5" stroke-linecap="butt"/></g></g>
<circle cx="389.7" cy="437" r="17.7" fill="#5d6cae" stroke="#0a0a0a" stroke-width="2.1"/><g transform="translate(389.7,437)" stroke="#fff" fill="none" stroke-width="1.9" stroke-linecap="round" stroke-linejoin="round"><path d="M-11 -0.5 L-0.5 -0.5 L6.5 -10 M-0.5 -0.5 L6.5 9.5"/><path d="M7.8 -11.6 L2.4 -9.9 L6.6 -6.5 Z M7.4 11.2 L2.2 9.4 L6.4 6.0 Z" fill="#fff" stroke-width="1"/></g>
<circle cx="482" cy="459" r="17.7" fill="#5d6cae" stroke="#0a0a0a" stroke-width="2.1"/><g transform="translate(482,459)" stroke="#fff" fill="none" stroke-width="1.9" stroke-linecap="round" stroke-linejoin="round"><circle cx="-5.1" cy="-8.9" r="1.95" fill="#fff" stroke="none"/><path d="M-5 -6 L-9.8 0.8 M-5 -6 L-0.1 0.9 M-5 -6 L-5 3.2 L-9.7 9.8 M-5 3.2 L0.3 9.8"/><g transform="translate(5.7,3.7)" stroke-width="1.2"><circle r="2.8"/><line x1="3.20" y1="0.00" x2="5.00" y2="0.00" stroke-width="1.5" stroke-linecap="butt"/><line x1="2.26" y1="2.26" x2="3.54" y2="3.54" stroke-width="1.5" stroke-linecap="butt"/><line x1="0.00" y1="3.20" x2="0.00" y2="5.00" stroke-width="1.5" stroke-linecap="butt"/><line x1="-2.26" y1="2.26" x2="-3.54" y2="3.54" stroke-width="1.5" stroke-linecap="butt"/><line x1="-3.20" y1="0.00" x2="-5.00" y2="0.00" stroke-width="1.5" stroke-linecap="butt"/><line x1="-2.26" y1="-2.26" x2="-3.54" y2="-3.54" stroke-width="1.5" stroke-linecap="butt"/><line x1="-0.00" y1="-3.20" x2="-0.00" y2="-5.00" stroke-width="1.5" stroke-linecap="butt"/><line x1="2.26" y1="-2.26" x2="3.54" y2="-3.54" stroke-width="1.5" stroke-linecap="butt"/></g></g>
<circle cx="577.7" cy="437" r="17.7" fill="#5d6cae" stroke="#0a0a0a" stroke-width="2.1"/><g transform="translate(577.7,437)" stroke="#fff" fill="none" stroke-width="1.9" stroke-linecap="round" stroke-linejoin="round"><path d="M-8.6 -6.8 L-3.6 -0.4 L-8.6 7.2 M-3.6 -0.4 L8.5 -0.4" stroke-width="2.1"/><path d="M4.6 -4.6 L9.4 -0.4 L4.6 3.6 Z" fill="#fff" stroke-width="1.4"/></g>
<g font-family="Liberation Sans" font-size="9.6" letter-spacing="0.1" fill="#151515" text-anchor="middle">
<text x="487.5" y="226">Reopen</text>
<text x="487.5" y="237.5">Diagram</text>
<text x="213" y="389.8">Does</text>
<text x="213" y="402">Customer</text>
<text x="213" y="414.5">have Data?</text>
<text x="489.5" y="338.7">Draw</text>
<text x="489.5" y="350.5">Diagram</text>
<text x="394.2" y="377.6">Enter DB</text>
<text x="394.2" y="389.9">Connection</text>
<text x="394.2" y="402.7">Params</text>
<text x="573" y="377.4">Define DB</text>
<text x="573" y="389.2">Mapping</text>
<text x="747.5" y="389.8">Choose</text>
<text x="747.5" y="402">Default Style</text>
<text x="747.5" y="414.7">Sheet from</text>
<text x="722.3" y="426.8" text-anchor="start" letter-spacing="0.75">Templates</text>
<text x="302.7" y="466">Choose XML</text>
<text x="302.7" y="477.4">File</text>
<text x="389.7" y="466">File has</text>
<text x="389.7" y="477.4">SDM</text>
<text x="389.7" y="490.6">Format?</text>
<text x="482" y="486.8">Define XML</text>
<text x="482" y="498.7">Mapping?</text>
</g>
<g font-family="Liberation Sans" font-size="10.7" font-style="italic" fill="#222">
<text x="312" y="314.6">No data</text>
<text x="287" y="365">Database</text>
<text x="247" y="408">XML</text>
</g>
</g>
</svg>
<!-- V scrollbar -->
<div class="a" style="left:767px;top:147px;width:16px;height:363px;background:#eeeeee;border-left:1px solid #7a8a99;border-right:1px solid #7a8a99"></div>
<div class="a" style="left:768px;top:147px;width:1px;height:363px;background:#c4d7ea"></div>
<div class="a" style="left:767px;top:147px;width:16px;height:15px;background:#eeeeee;border:1px solid #7a8a99;border-top:none;box-shadow:inset 1px 1px 0 #fff"></div>
<svg class="a" style="left:771px;top:151px" width="10" height="6"><path d="M0.5 5H9.5L5 0.5Z" fill="#222"/></svg>
<div class="a" style="left:767px;top:234px;width:16px;height:190px;border:1px solid #6382bf;background:linear-gradient(90deg,#dde8f3 0%,#ffffff 30%,#d8e5f2 55%,#c1d4e9 100%)"></div>
<div class="a" style="left:771px;top:327px;width:9px;height:1px;background:#6382bf;box-shadow:0 2px 0 #6382bf,0 4px 0 #6382bf"></div>
<div class="a" style="left:767px;top:493px;width:16px;height:16px;background:#eeeeee;border:1px solid #7a8a99;box-shadow:inset 1px 1px 0 #fff"></div>
<svg class="a" style="left:771px;top:498px" width="10" height="6"><path d="M0.5 0.5H9.5L5 5Z" fill="#222"/></svg>
<div class="a" style="left:783px;top:121px;width:3px;height:408px;background:#f4f4f4"></div>
<!-- H scrollbar -->
<div class="a" style="left:190px;top:510px;width:577px;height:16px;background:#eeeeee;border-top:1px solid #7a8a99;border-bottom:1px solid #7a8a99"></div>
<div class="a" style="left:190px;top:511px;width:577px;height:1px;background:#c4d7ea"></div>
<div class="a" style="left:190px;top:510px;width:16px;height:16px;background:#eeeeee;border:1px solid #7a8a99;border-left:none;box-shadow:inset 1px 1px 0 #fff"></div>
<svg class="a" style="left:195px;top:513px" width="6" height="10"><path d="M5 0.5V9.5L0.5 5Z" fill="#222"/></svg>
<div class="a" style="left:313px;top:510px;width:106px;height:16px;border:1px solid #6382bf;background:linear-gradient(#dde8f3 0%,#ffffff 30%,#d8e5f2 55%,#c1d4e9 100%)"></div>
<div class="a" style="left:364px;top:514px;width:1px;height:9px;background:#6382bf;box-shadow:2px 0 0 #6382bf,4px 0 0 #6382bf"></div>
<div class="a" style="left:750px;top:510px;width:17px;height:16px;background:#eeeeee;border:1px solid #7a8a99;box-shadow:inset 1px 1px 0 #fff"></div>
<svg class="a" style="left:756px;top:513px" width="6" height="10"><path d="M0.5 0.5V9.5L5 5Z" fill="#222"/></svg>
<div class="a" style="left:767px;top:510px;width:16px;height:16px;background:#eeeeee"></div>
<div class="a" style="left:188px;top:526px;width:598px;height:3px;background:#f4f4f4"></div>

<!-- STATUS BAR -->
<div class="a" style="left:182px;top:534px;width:609px;height:1px;background:#fafafa"></div>
<div class="a" style="left:2px;top:539px;width:537px;height:20px;border:1px solid #6a6a6a;box-shadow:inset 1px 1px 0 #fff"></div>
<div class="a" style="left:543px;top:539px;width:75px;height:20px;border:1px solid #6a6a6a;box-shadow:inset 1px 1px 0 #fff"></div>
<div class="t" style="left:549px;top:543px;font-size:12px;font-weight:bold;-webkit-text-stroke:0;color:#222">default.css</div>
<div class="a" style="left:622px;top:539px;width:42px;height:20px;border:1px solid #6a6a6a;box-shadow:inset 1px 1px 0 #fff"></div>
<div class="t" style="left:628px;top:543px;font-size:12px;font-weight:bold;-webkit-text-stroke:0;color:#222">51/53</div>
<div class="a" style="left:669px;top:539px;width:53px;height:20px;border:1px solid #6a6a6a;box-shadow:inset 1px 1px 0 #fff"></div>
<div class="t" style="left:674px;top:543px;font-size:12px;font-weight:bold;-webkit-text-stroke:0;color:#222">109ms.</div>
<div class="a" style="left:727px;top:539px;width:62px;height:20px;border:1px solid #6a6a6a;box-shadow:inset 1px 1px 0 #fff"></div>
<div class="t" style="left:732px;top:543px;font-size:12px;font-weight:bold;-webkit-text-stroke:0;color:#222">13M/19M</div>

</body></html>
